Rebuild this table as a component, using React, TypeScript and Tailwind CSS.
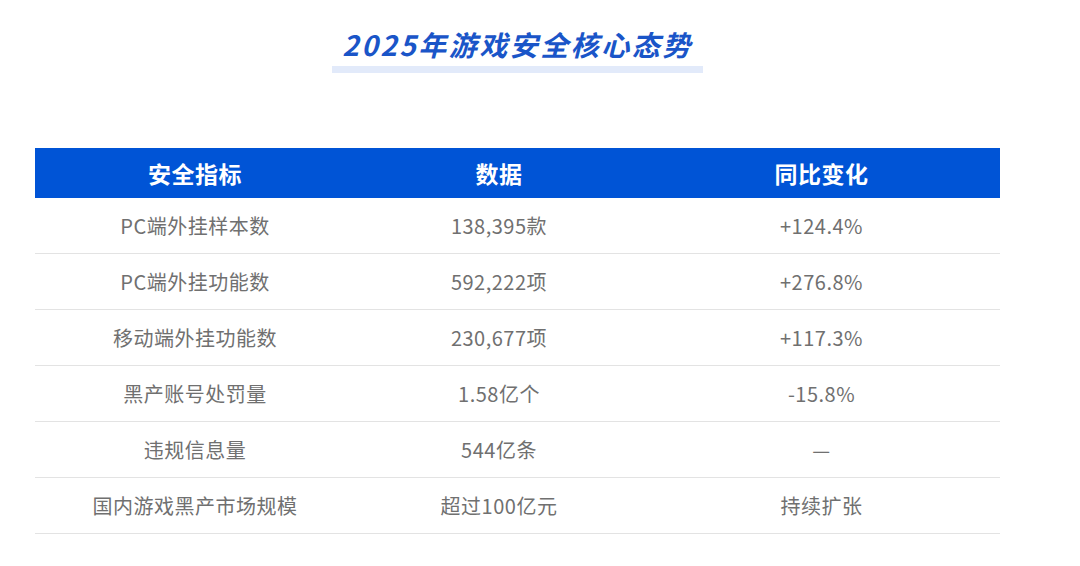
import React from "react";

const rows: [string, string, string][] = [
  ["PC端外挂样本数", "138,395款", "+124.4%"],
  ["PC端外挂功能数", "592,222项", "+276.8%"],
  ["移动端外挂功能数", "230,677项", "+117.3%"],
  ["黑产账号处罚量", "1.58亿个", "-15.8%"],
  ["违规信息量", "544亿条", "—"],
  ["国内游戏黑产市场规模", "超过100亿元", "持续扩张"],
];

const font = { fontFamily: '"Noto Sans CJK SC", "Noto Sans", sans-serif' };

export default function App() {
  return (
    <div className="w-[1080px] h-[566px] bg-white overflow-hidden" style={font}>
      <div className="ml-[35px] w-[965px] pt-[27px]">
        <div className="flex flex-col items-center">
          <div className="text-[28px] leading-[34px] font-bold italic tracking-[2.5px] text-[#1a55c8]">
            2025年游戏安全核心态势
          </div>
          <div className="mt-[5px] w-[371px] h-[7px] bg-[#e2eafa]" />
        </div>
        <div className="mt-[75px]">
          <div className="flex h-[50px] bg-[#0054d6] text-white text-[23px] font-bold tracking-[0.5px]">
            <div className="w-[320px] flex items-center justify-center">安全指标</div>
            <div className="w-[288px] flex items-center justify-center">数据</div>
            <div className="w-[357px] flex items-center justify-center">同比变化</div>
          </div>
          {rows.map((r, i) => (
            <div
              key={i}
              className="flex h-[56px] border-b border-[#e3e3e3] text-[20px] tracking-[0.5px] text-[#707070]"
            >
              <div className="w-[320px] flex items-center justify-center">{r[0]}</div>
              <div className="w-[288px] flex items-center justify-center">{r[1]}</div>
              <div className="w-[357px] flex items-center justify-center">{r[2]}</div>
            </div>
          ))}
        </div>
      </div>
    </div>
  );
}
